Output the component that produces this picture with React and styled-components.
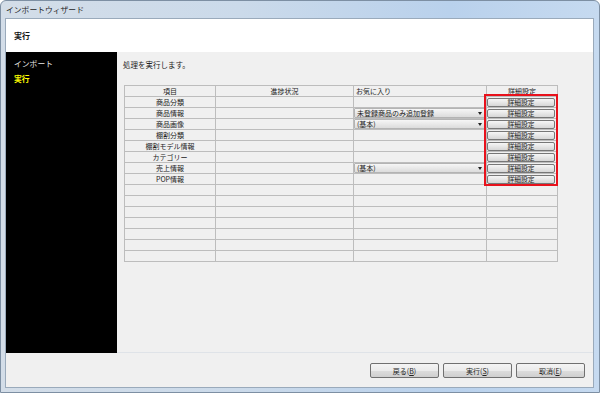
import React from "react";
import styled, { createGlobalStyle } from "styled-components";

const GlobalStyle = createGlobalStyle`
  html, body {
    margin: 0;
    padding: 0;
    background: #ffffff;
  }
  body {
    font-family: "Noto Sans CJK JP", "Noto Sans", sans-serif;
  }
`;

const Window = styled.div`
  width: 600px;
  height: 393px;
  box-sizing: border-box;
  display: flex;
  flex-direction: column;
  background: linear-gradient(90deg, #d3dde8 0%, #cbdaea 40%, #b9d1ec 75%, #c6daf0 100%);
  border: 1px solid #7d8fa3;
  border-radius: 6px 6px 0 0;
  overflow: hidden;
`;

const TitleBar = styled.div`
  height: 17px;
  display: flex;
  align-items: center;
  padding-left: 5px;
  font-size: 7.8px;
  color: #1e1e1e;
`;

const Client = styled.div`
  flex: 1;
  display: flex;
  flex-direction: column;
  margin: 0 5px 4px 4px;
  border: 1px solid #9aaabb;
  background: #f0f0f0;
`;

const Header = styled.div`
  height: 33px;
  background: #ffffff;
  display: flex;
  align-items: center;
  padding-left: 8px;
  font-size: 8px;
  font-weight: bold;
  color: #111;
`;

const Main = styled.div`
  flex: 1;
  display: flex;
`;

const Sidebar = styled.div`
  width: 111px;
  background: #000000;
  padding: 7px 0 0 8px;
  box-sizing: border-box;
  display: flex;
  flex-direction: column;
  gap: 6px;
`;

const StepItem = styled.div`
  font-size: 7.8px;
  line-height: 9px;
  color: ${(p) => (p.$active ? "#ffff00" : "#e8e8e8")};
  font-weight: ${(p) => (p.$active ? "bold" : "normal")};
`;

const Content = styled.div`
  flex: 1;
  padding: 8px 0 0 6px;
  border-bottom: 1px solid #dfe3e8;
`;

const Message = styled.div`
  font-size: 7.5px;
  line-height: 9px;
  color: #222;
  margin-bottom: 16px;
`;

const TableWrap = styled.div`
  position: relative;
  width: 433px;
  margin-left: 1px;
`;

const Grid = styled.table`
  border-collapse: collapse;
  width: 433px;
  table-layout: fixed;
  border: 1px solid #8c8c8c;
  background: #f0f0f0;
`;

const Row = styled.tr`
  height: 11px;
`;

const Cell = styled.td`
  height: 10px;
  max-height: 10px;
  padding: 0;
  border: 1px solid #bdbdbd;
  font-size: 7px;
  line-height: 8px;
  color: #222;
  text-align: ${(p) => p.$align || "center"};
  padding-left: ${(p) => (p.$align === "left" ? "2px" : "0")};
  white-space: nowrap;
  overflow: hidden;
  vertical-align: middle;
`;

const HeadCell = styled(Cell).attrs({ as: "th" })`
  font-weight: normal;
`;

const Select = styled.div`
  height: 8px;
  margin: 0 1px 0 -2px;
  display: flex;
  align-items: center;
  justify-content: space-between;
  padding: 0 2px 0 2px;
  background: linear-gradient(#f6f6f6, #dcdcdc);
  border: 1px solid #b4b4b4;
  border-radius: 1px;
  font-size: 7px;
  line-height: 8px;
  color: #222;
`;

const Arrow = styled.span`
  width: 0;
  height: 0;
  border-left: 2px solid transparent;
  border-right: 2px solid transparent;
  border-top: 3px solid #222;
`;

const DetailButton = styled.div`
  height: 7px;
  margin: 0 2px 0 0;
  display: flex;
  align-items: center;
  justify-content: center;
  background: linear-gradient(#f6f6f6 0%, #e6e6e6 50%, #d6d6d6 100%);
  border: 1px solid #777;
  border-radius: 2px;
  font-size: 6.8px;
  line-height: 7px;
  color: #222;
`;

const Highlight = styled.div`
  position: absolute;
  left: 360px;
  top: 9px;
  width: 70px;
  height: 88px;
  border: 2px solid #e8121c;
  pointer-events: none;
`;

const Footer = styled.div`
  height: 34px;
  display: flex;
  justify-content: flex-end;
  align-items: flex-start;
  padding: 10px 8px 0 0;
  box-sizing: border-box;
  gap: 4px;
`;

const WizardButton = styled.div`
  width: 67px;
  height: 13px;
  display: flex;
  align-items: center;
  justify-content: center;
  background: linear-gradient(#f4f4f4 0%, #ebebeb 50%, #dddddd 51%, #cfcfcf 100%);
  border: 1px solid #707070;
  border-radius: 2px;
  font-size: 7px;
  color: #222;
  u {
    text-decoration: underline;
  }
`;

const rows = [
  { name: "商品分類" },
  { name: "商品情報", fav: "未登録商品のみ追加登録" },
  { name: "商品画像", fav: "(基本)" },
  { name: "棚割分類" },
  { name: "棚割モデル情報" },
  { name: "カテゴリー" },
  { name: "売上情報", fav: "(基本)" },
  { name: "POP情報" },
];

const App = () => {
  const empty = Array.from({ length: 7 });
  return (
    <>
      <GlobalStyle />
      <Window>
        <TitleBar>インポートウィザード</TitleBar>
        <Client>
          <Header>実行</Header>
          <Main>
            <Sidebar>
              <StepItem>インポート</StepItem>
              <StepItem $active>実行</StepItem>
            </Sidebar>
            <Content>
              <Message>処理を実行します。</Message>
              <TableWrap>
                <Grid>
                  <colgroup>
                    <col style={{ width: 91 }} />
                    <col style={{ width: 138 }} />
                    <col style={{ width: 133 }} />
                    <col style={{ width: 71 }} />
                  </colgroup>
                  <thead>
                    <Row>
                      <HeadCell>項目</HeadCell>
                      <HeadCell>進捗状況</HeadCell>
                      <HeadCell $align="left">お気に入り</HeadCell>
                      <HeadCell>詳細設定</HeadCell>
                    </Row>
                  </thead>
                  <tbody>
                    {rows.map((r) => (
                      <Row key={r.name}>
                        <Cell>{r.name}</Cell>
                        <Cell />
                        <Cell $align="left">
                          {r.fav && (
                            <Select>
                              <span>{r.fav}</span>
                              <Arrow />
                            </Select>
                          )}
                        </Cell>
                        <Cell>
                          <DetailButton>詳細設定</DetailButton>
                        </Cell>
                      </Row>
                    ))}
                    {empty.map((_, i) => (
                      <Row key={"e" + i}>
                        <Cell />
                        <Cell />
                        <Cell />
                        <Cell />
                      </Row>
                    ))}
                  </tbody>
                </Grid>
                <Highlight />
              </TableWrap>
            </Content>
          </Main>
          <Footer>
            <WizardButton>戻る(<u>B</u>)</WizardButton>
            <WizardButton>実行(<u>S</u>)</WizardButton>
            <WizardButton>取消(<u>E</u>)</WizardButton>
          </Footer>
        </Client>
      </Window>
    </>
  );
};

export default App;
